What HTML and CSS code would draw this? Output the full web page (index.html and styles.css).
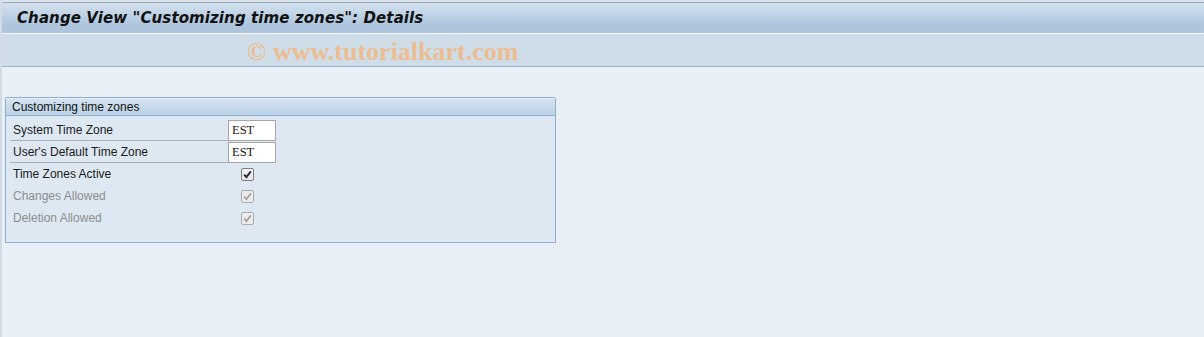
FILE: index.html
```html
<!DOCTYPE html>
<html lang="en">
<head>
<meta charset="UTF-8" />
<title>Change View "Customizing time zones": Details</title>
<link rel="stylesheet" href="styles.css">
</head>
<body>

<div class="app">
  <header class="titlebar">
    <h1>Change View "Customizing time zones": Details</h1>
  </header>
  <div class="toolbar">
    <span class="watermark">© www.tutorialkart.com</span>
  </div>

  <main class="content">
    <section class="group">
      <div class="group-head">Customizing time zones</div>
      <div class="group-body">
        <div class="row">
          <label class="label entry">System Time Zone</label>
          <span class="field">EST</span>
        </div>
        <div class="row">
          <label class="label entry">User's Default Time Zone</label>
          <span class="field">EST</span>
        </div>
        <div class="row">
          <label class="label">Time Zones Active</label>
          <span class="check">
            <svg viewBox="0 0 13 13" width="13" height="13"><path d="M3.2 6.6 L5.4 9.2 L9.8 3.4" fill="none" stroke="#2b2b3a" stroke-width="2"/></svg>
          </span>
        </div>
        <div class="row disabled">
          <label class="label">Changes Allowed</label>
          <span class="check">
            <svg viewBox="0 0 13 13" width="13" height="13"><path d="M3.2 6.6 L5.4 9.2 L9.8 3.4" fill="none" stroke="#9a9a9a" stroke-width="1.6"/></svg>
          </span>
        </div>
        <div class="row disabled">
          <label class="label">Deletion Allowed</label>
          <span class="check">
            <svg viewBox="0 0 13 13" width="13" height="13"><path d="M3.2 6.6 L5.4 9.2 L9.8 3.4" fill="none" stroke="#9a9a9a" stroke-width="1.6"/></svg>
          </span>
        </div>
      </div>
    </section>
  </main>
</div>

</body>
</html>
```

FILE: styles.css
```css
  body {
    margin: 0;
    background: #e8eff7;
    font-family: "Liberation Sans", Arial, sans-serif;
    font-size: 12px;
    color: #000;
  }
  .app {
    min-height: 337px;
    border-left: 2px solid #d3dbe5;
    box-sizing: border-box;
  }
  .titlebar {
    border-top: 2px solid #dde3ea;
    border-bottom: 1px solid #f2f6fa;
    box-shadow: inset 0 1px 0 #97a9bd;
    height: 31px;
    background: linear-gradient(#d6e3f0, #adc5dd 75%, #adc4dc);
    display: flex;
    align-items: center;
    padding-left: 15px;
  }
  .titlebar h1 {
    margin: 0;
    padding-top: 1px;
    font-family: "DejaVu Sans", Verdana, sans-serif;
    font-size: 15px;
    letter-spacing: 0.1px;
    font-weight: bold;
    font-style: italic;
    color: #111;
  }
  .toolbar {
    height: 32px;
    background: #cfdde8;
    border-bottom: 1px solid #9db2c6;
    display: flex;
    align-items: center;
    padding-left: 245px;
  }
  .watermark {
    font-family: "Liberation Serif", "Times New Roman", serif;
    font-size: 26px;
    font-weight: bold;
    color: #ecbd92;
    padding-top: 4px;
  }
  .content {
    padding: 30px 0 0 3px;
  }
  .group {
    width: 549px;
    border: 1px solid #8eafcf;
    border-radius: 2px 2px 0 0;
    background: #dde8f3;
  }
  .group-head {
    height: 16px;
    line-height: 16px;
    padding-left: 6px;
    background: linear-gradient(#d4e3f1, #bcd2e7);
    border-bottom: 1px solid #8eafcf;
    border-top: 1px solid #e8f0f8;
    font-size: 12px;
    color: #111;
  }
  .group-body {
    padding: 3px 0 13px 4px;
  }
  .row {
    display: flex;
    align-items: center;
    height: 22px;
  }
  .label {
    width: 218px;
    height: 21px;
    line-height: 21px;
    padding-left: 3px;
    box-sizing: border-box;
    font-size: 12px;
    color: #1a1a1a;
  }
  .label.entry {
    border-bottom: 1px solid #a9aeb3;
  }
  .disabled .label {
    color: #8d8d8d;
  }
  .field {
    width: 48px;
    height: 21px;
    box-sizing: border-box;
    border: 1px solid #a7a7a7;
    background: #fff;
    font-family: "Liberation Serif", "Times New Roman", serif;
    font-size: 12.5px;
    line-height: 18px;
    padding-left: 3px;
    color: #2e1414;
  }
  .check {
    margin-left: 13px;
    width: 13px;
    height: 13px;
    box-sizing: border-box;
    border: 1px solid #7e7e7e;
    border-radius: 2px;
    background: linear-gradient(#f4f4f4, #e6e6e6);
    display: flex;
    align-items: center;
    justify-content: center;
  }
  .check svg {
    flex: none;
  }
  .disabled .check {
    border-color: #a9a9a9;
    background: #ececec;
  }
```
